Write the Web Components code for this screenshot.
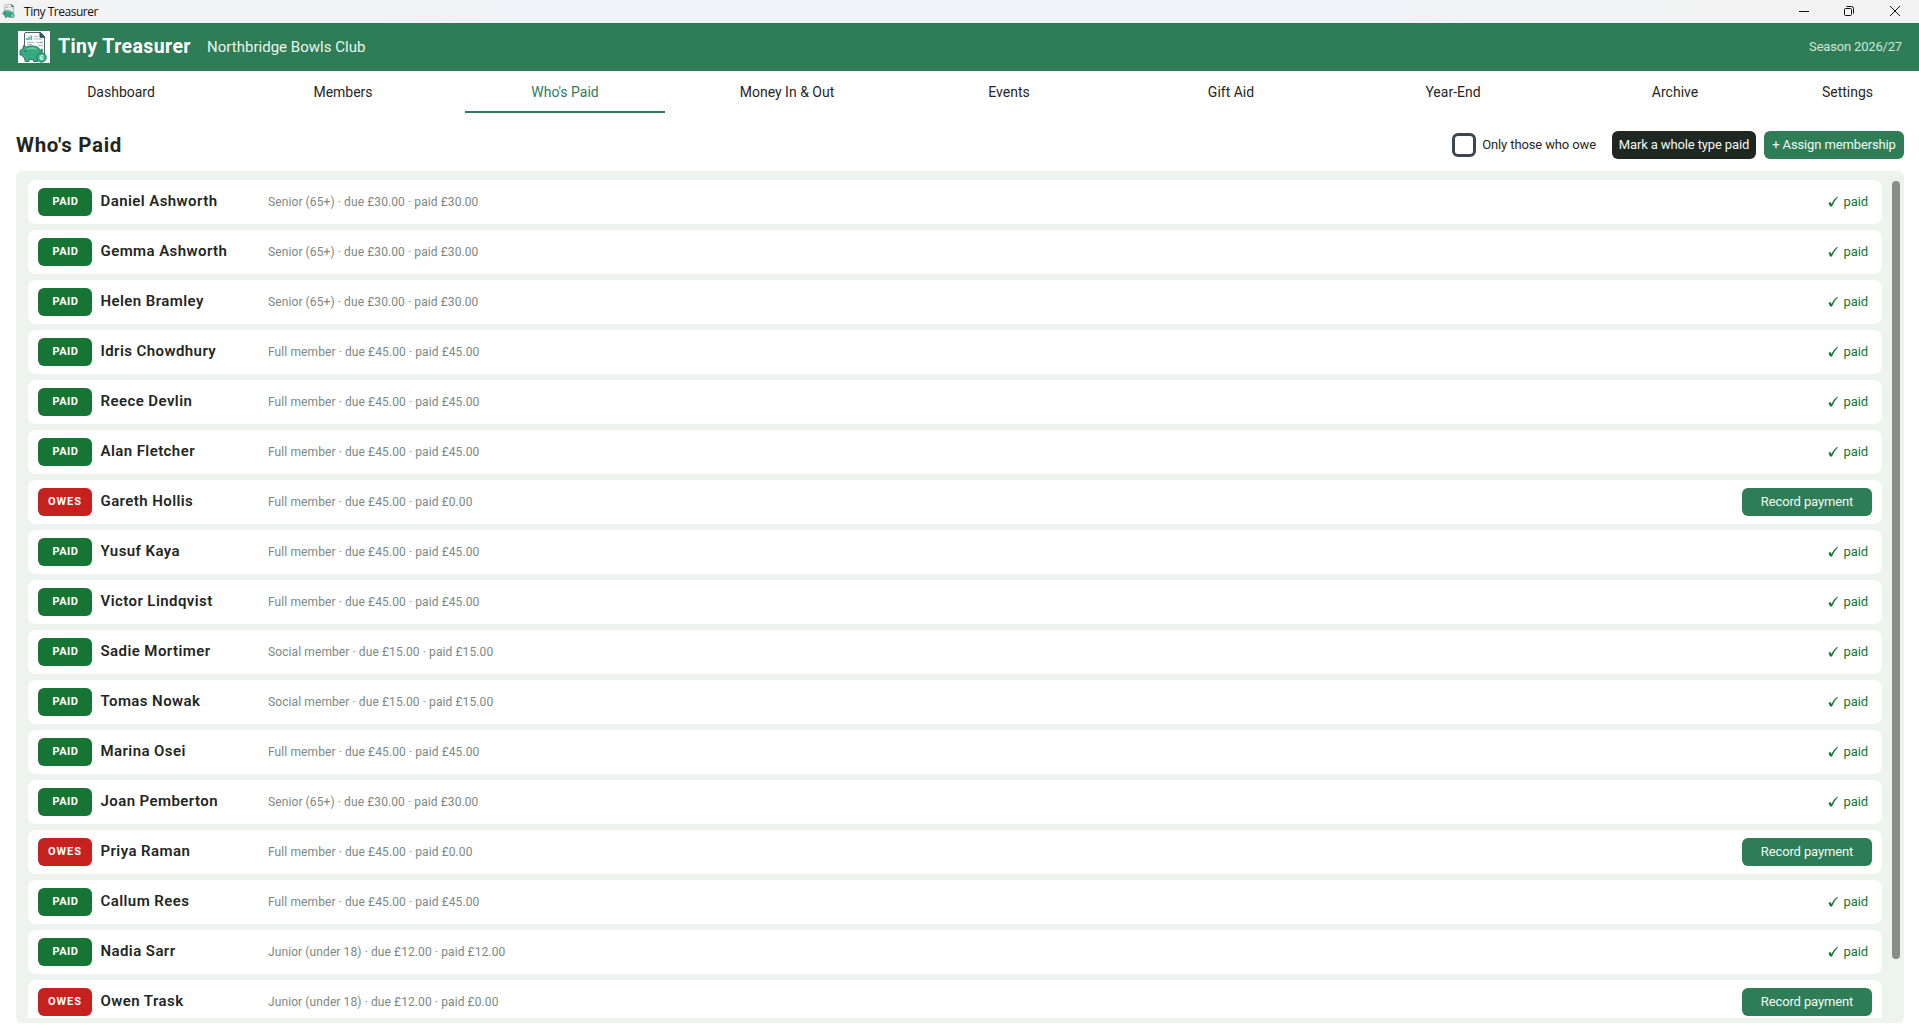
<!DOCTYPE html>
<html lang="en-GB">
<head>
<meta charset="utf-8">
<title>Tiny Treasurer</title>
<style>
html,body{margin:0;height:100%;overflow:hidden;background:#fff}
body{font-family:Roboto,"Liberation Sans",sans-serif;color:#1f2723}
</style>
</head>
<body>
<tt-app></tt-app>
<script>
const define=(name,html,setup)=>customElements.define(name,class extends HTMLElement{
  constructor(){super();this.attachShadow({mode:'open'})}
  connectedCallback(){
    if(this.ready)return;this.ready=true;
    const t=document.createElement('template');
    t.innerHTML=typeof html==='function'?html(this):html;
    this.shadowRoot.append(t.content.cloneNode(true));
    if(setup)setup(this);
  }
});

define('tt-logo',`<style>:host{display:block;flex:none;background:#fff}svg{display:block;width:100%;height:100%}</style>
<svg viewBox="0 0 32 32">
<path d="M6.500 17V3Q6.500 1.500 8 1.500H22.500L26.500 5.500V24H8Z" fill="#fafcfc" stroke="#50626e" stroke-width="1"/>
<path d="M22 1.500V6.200H26.700Z" fill="#2f5a62" stroke="#244955"/>
<path d="M9 9V7M11 9V5.800M13.200 9V4.600" stroke="#38b78a" stroke-width="1.500"/>
<path d="M16 5.500H20M16 8H24M9 11.500H16M9 13.500H14M18 11.500H23M20 14.500H25" stroke="#a9b9bf" stroke-width="1"/>
<path d="M22.500 11.500H24.500" stroke="#38b78a" stroke-width="1.400"/>
<path d="M5.500 14.500Q7 14.800 8.300 16.100Q11 14.700 14.500 14.900Q21 15.400 22.600 19.700Q24.300 20 23.800 17.800Q25.700 20.900 22.800 22Q22.600 24.500 20 26.500L19.500 30.500H15.500L15 28.400H11.500L10.800 30.600H7.200L6.500 27Q4.700 26 4 24H2V19.500L4.700 18Z" fill="#37aa80" stroke="#216a61" stroke-width=".9"/>
<path d="M8.500 18.500Q13 15.800 18.500 18.300" fill="none" stroke="#62cfa2" stroke-width="1.600"/>
<circle cx="7.700" cy="20.300" r=".7" fill="#12453f"/>
<circle cx="23.500" cy="26.500" r="4.700" fill="#37a784" stroke="#237769"/>
<circle cx="23.500" cy="26.500" r="3" fill="#64c5a3"/>
<path d="M25 24.800Q23 23.600 22.900 25.500V28.400H25M22 26.600H24.500" fill="none" stroke="#e6fff4" stroke-width=".9"/>
</svg>`);

define('tt-titlebar',`<style>
:host{display:flex;align-items:center;height:23px;box-sizing:border-box;padding:0 18px 2px 2px;background:linear-gradient(90deg,#f3f3f3 0,#f0f3f8 30%,#f0f3f8 70%,#f3f3f3 90%);color:#111}
tt-logo{width:14px;height:16px;background:none;margin-right:8px}
span{flex:1;font:12px/20px "Open Sans",sans-serif;letter-spacing:-.48px;padding-top:2px}
svg{display:block;width:12px;height:12px;margin-left:33px;fill:none;stroke:#111}
svg:last-child{margin-left:34px}
</style><tt-logo></tt-logo><span>Tiny Treasurer</span>
<svg viewBox="0 0 12 12"><path d="M1 6.500H11"/></svg>
<svg viewBox="0 0 12 12"><rect x="1.500" y="3.500" width="7" height="7" rx="1"/><path d="M3.500 1.500H8.500Q10.500 1.500 10.500 3.500V8.500"/></svg>
<svg viewBox="0 0 12 12"><path d="M1 1L11 11M11 1L1 11"/></svg>`);

define('tt-header',`<style>
:host{display:flex;align-items:center;height:48px;box-sizing:border-box;padding:0 17px 0 18px;background:#2f7d57;color:#fff}
tt-logo{width:32px;height:32px;margin-right:8px}
b{font-size:19.500px;line-height:48px;letter-spacing:.4px;font-weight:700;width:133px;margin-right:16px;margin-top:-1px;white-space:nowrap}
.club{font-size:15px;letter-spacing:.02px;color:#eaf5ee;flex:1}
.season{font-size:13px;letter-spacing:-.18px;color:#cfe5d8;margin-top:-1px}
</style><tt-logo></tt-logo><b>Tiny Treasurer</b><span class="club">Northbridge Bowls Club</span><span class="season">Season 2026/27</span>`);

define('tt-tab',`<style>
:host{display:flex;flex-direction:column;align-items:center;justify-content:space-between;width:222px;height:42px;box-sizing:border-box;font-size:14px}
:host([last]){width:123px}
span{line-height:42px;height:40px}
i{display:block;width:200px;height:2px}
:host([active]){color:#2f7d57}
:host([active]) i{background:#2f7d57}
:host([last]) i{width:100px}
</style><span><slot></slot></span><i></i>`);

define('tt-tabs',`<style>:host{display:flex;height:42px;padding:0 10px}</style>
<tt-tab>Dashboard</tt-tab><tt-tab>Members</tt-tab><tt-tab active>Who's Paid</tt-tab><tt-tab>Money In &amp; Out</tt-tab><tt-tab>Events</tt-tab><tt-tab>Gift Aid</tt-tab><tt-tab>Year-End</tt-tab><tt-tab>Archive</tt-tab><tt-tab last>Settings</tt-tab>`);

define('tt-button',`<style>
:host{display:flex;align-items:flex-start;justify-content:center;flex:none;height:28px;width:130px;border-radius:6px;background:#2f7d57;color:#f2faf5;font-size:13px;line-height:27px;letter-spacing:-.13px;white-space:nowrap}
:host([dark]){background:#1f2723;width:144px}
:host([wide]){width:140px}
</style><span><slot></slot></span>`);

define('tt-toolbar',`<style>
:host{display:flex;align-items:center;height:58px;padding:6px 15px 0 16px;box-sizing:border-box}
h1{font-size:20.500px;line-height:24px;font-weight:700;letter-spacing:.7px;margin:-1px 0 0;flex:1}
.box{width:24px;height:24px;box-sizing:border-box;border:3px solid #3c474d;border-radius:6px;margin-right:6px}
.label{font-size:13px;line-height:27px;letter-spacing:-.12px;margin:-1px 16px 0 0}
tt-button+tt-button{margin-left:8px}
</style><h1>Who's Paid</h1><div class="box"></div><span class="label">Only those who owe</span><tt-button dark>Mark a whole type paid</tt-button><tt-button wide>+ Assign membership</tt-button>`);

define('tt-badge',`<style>
:host{display:flex;align-items:center;justify-content:center;width:54px;height:28px;border-radius:6px;background:#167534;color:#fff;font-size:11px;font-weight:700;letter-spacing:.5px;flex:none}
:host([owes]){background:#c5221f;letter-spacing:.95px}
span{margin:-1px 0 0 1px}
:host([owes]) span{margin-left:0}
</style><span><slot></slot></span>`);

define('tt-row',el=>{
  const owes=el.hasAttribute('owes');
  return `<style>
:host{display:flex;align-items:center;height:44px;flex:none;box-sizing:border-box;padding:0 10px;border-radius:8px;background:#fff}
.name{width:167px;padding-left:8.500px;box-sizing:border-box;font-size:15px;line-height:18px;font-weight:600;letter-spacing:.42px;white-space:nowrap;margin-top:-2px}
.info{flex:1;font-size:12px;letter-spacing:.1px;color:#7b8982;white-space:pre;padding-left:9px}
.paid{display:flex;align-items:center;font-size:13px;line-height:16px;letter-spacing:-.12px;color:#167534;margin:-1px 4px 0 0}
svg{width:10px;height:11px;margin-right:6px}
</style><tt-badge ${owes?'owes':''}>${owes?'OWES':'PAID'}</tt-badge><span class="name"><slot></slot></span><span class="info">${el.getAttribute('info')}</span>${owes?'<tt-button>Record payment</tt-button>':'<span class="paid"><svg viewBox="0 0 10 11"><path d="M.5 6.700L2.300 5.900L3.400 7.900Q5.500 3.500 9.200 .700L9.900 1.200Q6.500 4.500 3.900 10.400H2Z" fill="#167534"/></svg>paid</span>'}`;
});

const S='Senior (65+)',F='Full member',C='Social member',J='Junior (under 18)';
const members=[['Daniel Ashworth',S,30,1],['Gemma Ashworth',S,30,1],['Helen Bramley',S,30,1],['Idris Chowdhury',F,45,1],['Reece Devlin',F,45,1],['Alan Fletcher',F,45,1],['Gareth Hollis',F,45,0],['Yusuf Kaya',F,45,1],['Victor Lindqvist',F,45,1],['Sadie Mortimer',C,15,1],['Tomas Nowak',C,15,1],['Marina Osei',F,45,1],['Joan Pemberton',S,30,1],['Priya Raman',F,45,0],['Callum Rees',F,45,1],['Nadia Sarr',J,12,1],['Owen Trask',J,12,0]];

define('tt-list',()=>`<style>
:host{display:flex;height:852px;margin:0 15px 0 16px;box-sizing:border-box;padding:9px 4px 5px 12px;background:#edf3ef;border-radius:6px}
.rows{flex:1;display:flex;flex-direction:column;gap:6px;height:838px;overflow:hidden}
.bar{width:8px;height:778px;border-radius:4px;background:#8b8b8b;margin:1px 0 0 10px}
</style><div class="rows">${members.map(([n,t,d,p])=>`<tt-row ${p?'':'owes'} info="${t} · due £${d}.00 · paid £${p?d:0}.00">${n}</tt-row>`).join('')}</div><div class="bar"></div>`);

define('tt-app',`<style>:host{display:block}</style><tt-titlebar></tt-titlebar><tt-header></tt-header><tt-tabs></tt-tabs><tt-toolbar></tt-toolbar><tt-list></tt-list>`);
</script>
</body>
</html>
